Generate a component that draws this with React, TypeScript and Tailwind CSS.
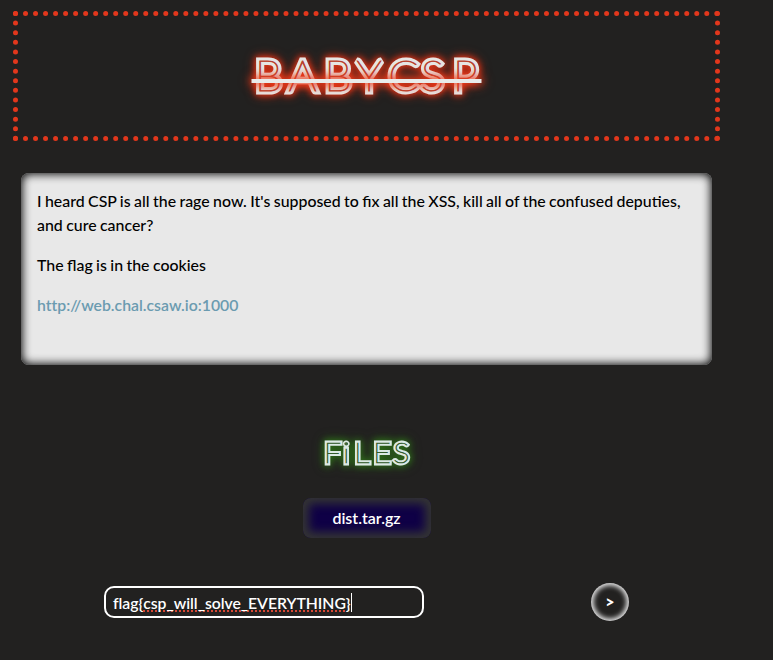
const files = ['dist.tar.gz'];

export default function App() {
  return (
    <main className="flex h-[660px] w-[773px] flex-col overflow-hidden bg-[#222120] pl-[13px] pt-[11px] font-['Lato',sans-serif] text-[15.9px] font-medium leading-6 text-white">
      <header className="h-[130px] w-[707px] border-5 border-dotted border-[#e2371c]">
        <svg className="h-[120px] w-[697px] overflow-visible" viewBox="18 16 697 120" role="heading" aria-label="BABYCSP">
          <defs>
            <text
              id="title"
              x="3.4 34.7 67.8 97.6 127 157.2 186.8"
              y="91.5"
              transform="translate(251 0) scale(1.08 1)"
              className="font-['Lato',sans-serif] text-[41px] font-thin"
            >
              BABYCSP
            </text>
          </defs>
          <g style={{ filter: 'drop-shadow(0 0 3px #e2371c) drop-shadow(0 0 4px #b52810)' }}>
            <use href="#title" fill="#e6e6e4" stroke="#e6e6e4" strokeWidth="7" strokeMiterlimit="2" />
          </g>
          <use href="#title" fill="#b9412e" stroke="#b9412e" strokeWidth="0.9" />
          <path d="M251.5 81H481.5" stroke="#e9ebea" strokeWidth="4" style={{ filter: 'drop-shadow(0 0 4px #f03a1a) drop-shadow(0 0 5px #f03a1a)' }} />
        </svg>
      </header>

      <section className="ml-2 mt-8 h-48 w-[691px] rounded-lg bg-[#e8e8e8] px-4 pt-4 text-black shadow-[inset_0_0_10px_1px_#000] [word-spacing:-0.6px]">
        <p>I heard CSP is all the rage now. It's supposed to fix all the XSS, kill all of the confused deputies, and cure cancer?</p>
        <p className="mt-4">The flag is in the cookies</p>
        <p className="mt-4 text-[15.8px] font-semibold text-[#6b9bb0] [font-variant-ligatures:none]">http://web.chal.csaw.io:1000</p>
      </section>

      <section className="mt-[63px] flex w-[707px] flex-col items-center">
        <svg className="h-[60px] w-[140px] overflow-visible" viewBox="297 428 140 60" role="heading" aria-label="FiLES">
          <defs>
            <text
              id="files"
              x="3.4 21.2 31.5 49 67.8"
              y="463"
              transform="translate(320 0) scale(1.08 1)"
              className="font-['Lato',sans-serif] text-[28.5px] font-thin"
            >
              FiLES
            </text>
          </defs>
          <g style={{ filter: 'drop-shadow(0 0 3px #2f6b1b) drop-shadow(0 0 4px #285a17)' }}>
            <use href="#files" fill="#dce9e4" stroke="#dce9e4" strokeWidth="4.8" />
          </g>
          <use href="#files" fill="#345c2c" stroke="#345c2c" strokeWidth="0.7" />
        </svg>
        {files.map((name) => (
          <button key={name} className="mt-[10px] h-10 w-32 rounded-lg bg-[#0f0046] text-base font-semibold text-white shadow-[inset_0_0_10px_6px_#333]">
            {name}
          </button>
        ))}
      </section>

      <form className="mt-[45px] flex items-center">
        <div className="ml-[91px] flex h-8 w-80 items-center rounded-[10px] border-2 border-white pl-[7px] text-[15.75px] font-semibold">
          <span className="mt-[1px] flex tracking-[-0.03px] [font-variant-ligatures:common-ligatures]">
            flag{'{'}
            <span className="underline decoration-[#d64734] decoration-dotted decoration-2 underline-offset-2 [text-decoration-skip-ink:none]">
              csp_will_solve_EVERYTHING
            </span>
            {'}'}
          </span>
          <span className="h-[19px] w-px bg-white" />
        </div>
        <button type="button" className="ml-[167px] h-[38px] w-[38px] rounded-full text-base font-black shadow-[inset_0_0_5px_2.5px_#e8e8e8]">
          &gt;
        </button>
      </form>
    </main>
  );
}
